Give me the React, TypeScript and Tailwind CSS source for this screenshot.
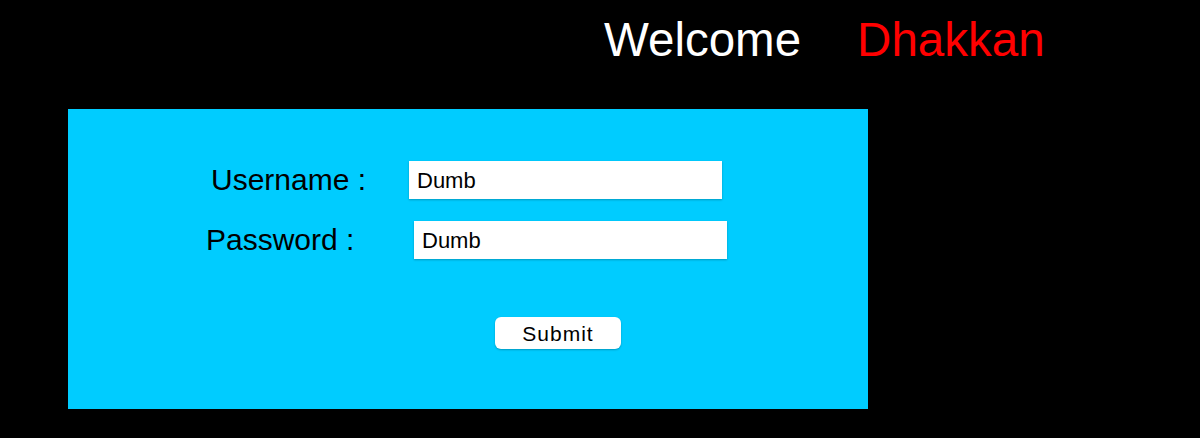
import React from 'react';

const App: React.FC = () => {
  return (
    <div className="min-h-[438px] w-[1200px] bg-black font-['Liberation_Sans',Arial,sans-serif]">
      <div className="flex pl-[604px] pt-[16px] text-[47.5px] leading-none">
        <span className="text-white">Welcome</span>
        <span className="ml-[56px] text-[#ff0000]">Dhakkan</span>
      </div>

      <div className="ml-[68px] mt-[45.5px] h-[300px] w-[800px] bg-[#00ccff] pt-[52px]">
        <div className="flex items-center pl-[143px]">
          <label className="w-[198px] text-[30px] leading-none text-black">Username :</label>
          <input
            readOnly
            value="Dumb"
            className="h-[38px] w-[313px] bg-white px-[8px] pt-[1px] text-[22px] text-black shadow-[0_1px_2px_rgba(0,0,0,0.25)] outline-none"
          />
        </div>
        <div className="mt-[22px] flex items-center pl-[138px]">
          <label className="w-[208px] text-[30px] leading-none text-black">Password :</label>
          <input
            readOnly
            value="Dumb"
            className="h-[38px] w-[313px] bg-white px-[8px] pt-[1px] text-[22px] text-black shadow-[0_1px_2px_rgba(0,0,0,0.25)] outline-none"
          />
        </div>
        <div className="mt-[58px] pl-[427px]">
          <button className="flex h-[32px] w-[126px] items-center justify-center rounded-[6px] bg-white pt-[2px] text-[21px] tracking-[1px] text-black shadow-[0_1px_2px_rgba(0,0,0,0.25)]">
            Submit
          </button>
        </div>
      </div>
    </div>
  );
};

export default App;
